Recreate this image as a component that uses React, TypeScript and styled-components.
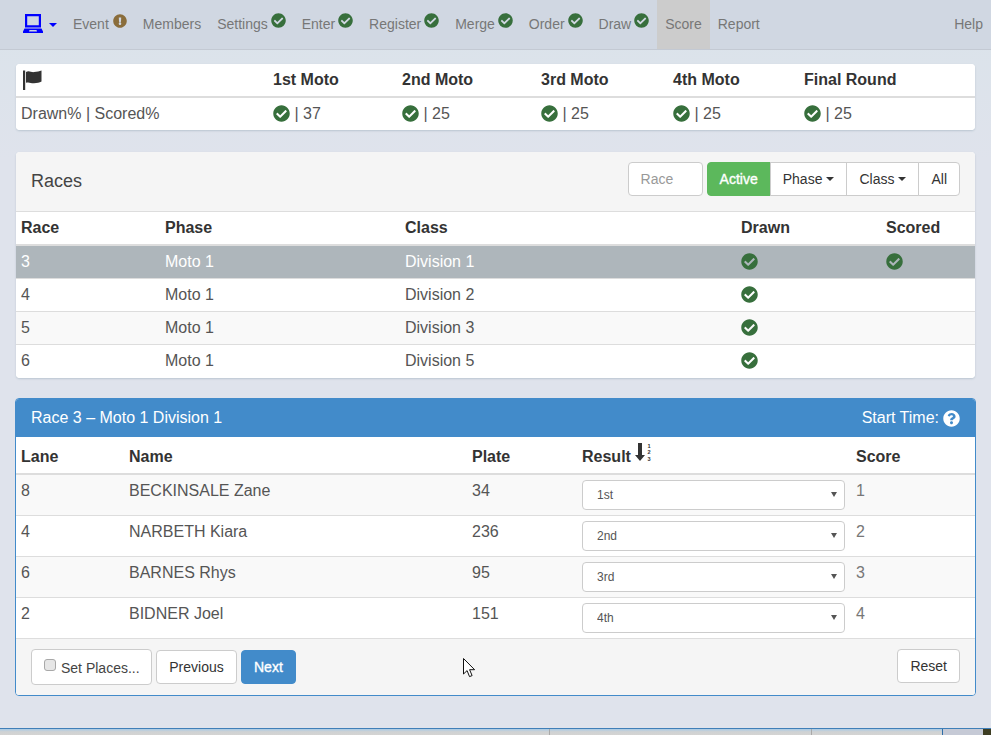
import React from "react";
import styled, { createGlobalStyle } from "styled-components";
import { FaCheckCircle, FaExclamationCircle, FaQuestionCircle } from "react-icons/fa";

const Global = createGlobalStyle`
  html, body { margin: 0; padding: 0; height: 735px; overflow: hidden; }
  body { font-family: "Liberation Sans", Arial, sans-serif; font-size: 16px; color: #333; background: #dfe3ec; }
  * { box-sizing: border-box; }
`;

const Page = styled.div`
  height: 735px;
  display: flex;
  flex-direction: column;
  background: linear-gradient(180deg, #dae3ea 0, #dfe3ec 160px);
`;
const Nav = styled.nav`
  height: 50px;
  flex: none;
  display: flex;
  align-items: stretch;
  background: #d0d7e2;
  border-bottom: 1px solid #c3c9d3;
  padding-left: 23px;
`;
const Brand = styled.div`
  display: flex;
  align-items: flex-start;
  width: 42px;
  gap: 6px;
  padding-top: 14px;
`;
const BrandCaret = styled.span`
  width: 0;
  height: 0;
  margin-top: 9px;
  border-left: 4px solid transparent;
  border-right: 4px solid transparent;
  border-top: 4px solid #0000ff;
`;
const NavItem = styled.div<{ $active?: boolean }>`
  display: flex;
  align-items: center;
  padding: 0 8px 2px;
  font-size: 14px;
  color: #777;
  background: ${(p) => (p.$active ? "#ccc" : "transparent")};
`;
const NavIcon = styled.span<{ $warn?: boolean }>`
  display: inline-flex;
  margin: -6px 0 0 ${(p) => (p.$warn ? 4 : 2.95)}px;
  color: ${(p) => (p.$warn ? "#8a6d3b" : "#376f3c")};
  font-size: ${(p) => (p.$warn ? 14 : 15)}px;
`;
const NavHelp = styled(NavItem)`
  margin-left: auto;
`;
const Main = styled.main`
  flex: 1;
  display: flex;
  flex-direction: column;
  padding: 14px 16px 0;
`;
const Card = styled.section<{ $mt?: number }>`
  background: #fff;
  border-radius: 4px;
  margin-top: ${(p) => p.$mt ?? 0}px;
  box-shadow: 0 1px 2px rgba(80, 110, 130, 0.25);
  overflow: hidden;
`;
const PrimaryCard = styled(Card)`
  border: 1px solid #428bca;
  margin: 20px -1px 0;
  box-shadow: none;
`;
const Row = styled.div<{ $cols: string; $h: number; $bg?: string; $line?: string; $selected?: boolean }>`
  display: grid;
  grid-template-columns: ${(p) => p.$cols};
  height: ${(p) => p.$h}px;
  align-items: center;
  padding: 0 0 0 5px;
  background: ${(p) => (p.$selected ? "#aeb6bb" : p.$bg ?? "#fff")};
  color: ${(p) => (p.$selected ? "#fff" : "#555")};
  border-bottom: ${(p) => p.$line ?? "1px solid #ddd"};
  font-size: 16px;
`;
const TopRow = styled(Row)`
  align-items: start;
`;
const HeadRow = styled(Row)`
  color: #333;
  font-weight: 700;
  border-bottom: 2px solid #ddd;
`;
const Cell = styled.div`
  display: flex;
  align-items: center;
  min-width: 0;
`;
const FlagCell = styled(Cell)`
  padding-left: 1.5px;
`;
const TextCell = styled(Cell)`
  line-height: 22px;
  padding-bottom: 1px;
`;
const HeadCell = styled(Cell)`
  line-height: 22px;
  padding-top: 4px;
`;
const ResultCell = styled(Cell)`
  padding-top: 5px;
`;
const BodyCell = styled(Cell)`
  padding-top: 5px;
  line-height: 22px;
`;
const ScoreCell = styled(BodyCell)`
  color: #777;
`;
const StatusIcon = styled.span`
  display: inline-flex;
  color: #376f3c;
  font-size: 17px;
  margin: 0 4.5px 2px 0;
`;
const PanelHead = styled.header`
  height: 60px;
  display: flex;
  align-items: flex-start;
  justify-content: space-between;
  padding: 10px 15px 0;
  background: #f5f5f5;
  border-bottom: 1px solid #ddd;
`;
const PanelTitle = styled.h3`
  margin: 9px 0 0;
  font-size: 18px;
  line-height: 20px;
  font-weight: 400;
  color: #444;
`;
const Tools = styled.div`
  display: flex;
  align-items: center;
  gap: 4px;
`;
const RaceInput = styled.input`
  width: 75px;
  height: 34px;
  padding: 6px 12px;
  font: 14px "Liberation Sans", Arial, sans-serif;
  border: 1px solid #ccc;
  border-radius: 4px;
  background: #fff;
  &::placeholder { color: #999; opacity: 1; }
`;
const BtnGroup = styled.div`
  display: flex;
`;
const Btn = styled.button<{ $tone?: "success" | "primary" }>`
  height: 34px;
  padding: 0 12px;
  font: 400 14px "Liberation Sans", Arial, sans-serif;
  color: ${(p) => (p.$tone ? "#fff" : "#333")};
  -webkit-text-stroke: ${(p) => (p.$tone ? "0.35px #fff" : "0")};
  background: ${(p) => (p.$tone === "success" ? "#5cb85c" : p.$tone === "primary" ? "#428bca" : "#fff")};
  border: 1px solid ${(p) => (p.$tone === "success" ? "#5cb85c" : p.$tone === "primary" ? "#428bca" : "#ccc")};
  border-radius: 4px;
  display: inline-flex;
  align-items: center;
  justify-content: center;
  white-space: nowrap;
`;
const GroupBtn = styled(Btn)`
  border-radius: 0;
  margin-left: -1px;
  &:first-child { border-radius: 4px 0 0 4px; margin-left: 0; }
  &:last-child { border-radius: 0 4px 4px 0; }
`;
const Caret = styled.span`
  display: inline-block;
  width: 0;
  height: 0;
  margin-left: 4px;
  border-left: 4px solid transparent;
  border-right: 4px solid transparent;
  border-top: 4px solid #333;
`;
const BlueHead = styled.header`
  height: 38px;
  display: flex;
  align-items: center;
  justify-content: space-between;
  padding: 0 15px;
  background: #428bca;
  color: #fff;
  font-size: 16px;
`;
const StartTime = styled.div`
  display: flex;
  align-items: center;
  gap: 4px;
`;
const ResultHead = styled(HeadCell)`
  gap: 4px;
`;
const SortWrap = styled.span`
  display: inline-flex;
  margin-top: -8px;
`;
const SelectWrap = styled.div`
  position: relative;
  width: 263px;
  &::after {
    content: "";
    position: absolute;
    right: 8px;
    top: 12px;
    width: 0;
    height: 0;
    border-left: 3px solid transparent;
    border-right: 3px solid transparent;
    border-top: 5px solid #555;
    pointer-events: none;
  }
`;
const ResultSelect = styled.select`
  display: block;
  width: 100%;
  height: 30px;
  padding: 5px 14px;
  appearance: none;
  font: 12px "Liberation Sans", Arial, sans-serif;
  color: #555;
  background: #fff;
  border: 1px solid #ccc;
  border-radius: 4px;
`;
const PanelFoot = styled.footer`
  height: 56px;
  display: flex;
  align-items: flex-start;
  justify-content: space-between;
  padding: 10px 15px 0;
  background: #f5f5f5;
`;
const FootLeft = styled.div`
  display: flex;
  align-items: flex-start;
  gap: 4px;
`;
const PlacesLabel = styled.label`
  width: 121px;
  height: 36px;
  display: flex;
  align-items: center;
  padding: 2px 0 0 12px;
  background: #fff;
  border: 1px solid #ccc;
  border-radius: 4px;
  font-size: 14px;
  color: #444;
  white-space: nowrap;
`;
const PlacesBox = styled.input`
  appearance: none;
  width: 12px;
  height: 12px;
  margin: -6px 5px 0 0;
  background: #e6e6e6;
  border: 1px solid #a8a8a8;
  border-radius: 3px;
`;
const FootBtn = styled(Btn)`
  margin-top: 1px;
`;
const PreviousBtn = styled(FootBtn)`
  width: 81px;
  padding: 0;
`;
const CursorWrap = styled.div`
  position: absolute;
  left: 463px;
  top: 658px;
  line-height: 0;
`;
const Taskbar = styled.div`
  flex: none;
  height: 7px;
  display: flex;
  border-top: 1px solid #3f7fb8;
`;
const TaskCell = styled.div<{ $w: number; $end?: string }>`
  flex: 0 0 ${(p) => p.$w}px;
  background: linear-gradient(180deg, #a9cbe6 0, #cfd2d4 45%, #d4d4d2 100%);
  border-right: 1px solid ${(p) => p.$end ?? "#a9a9a9"};
`;
const TaskTray = styled.div`
  flex: 1;
  background: #c6cad6;
`;
const TaskCorner = styled.div`
  flex: 0 0 8px;
  background: #3d3d22;
`;

const Check = () => <FaCheckCircle />;

const Laptop = () => (
  <svg width="20" height="19" viewBox="0 0 20 19" aria-hidden="true">
    <path fill="#0000ff" fillRule="evenodd" d="M2 0h16v13.500H2zM4.200 2.200v9h11.600v-9zM1.500 14.500h17l1.500 3V19H0v-1.500zM6.500 16 6 17.500h8l-.5-1.500z" />
  </svg>
);
const Flag = () => (
  <svg width="19" height="20" viewBox="0 0 19 20" aria-hidden="true">
    <path fill="#333" d="M0 .5h2.200V20H0zM3 2c3-1.700 5 .4 8 .1 3-.3 5.500-.9 7.500-1.600v11c-2 1-4.500 1.500-7.500 1.700-3 .2-5-1.600-8-.4z" />
  </svg>
);
const SortOrder = () => (
  <svg width="20" height="22" viewBox="0 0 20 22" aria-hidden="true">
    <path fill="#333" d="M3 1h4v12h3l-5 6-5-6h3z" />
    <text fontSize="5.600" fontWeight="700" fill="#333" fontFamily="Liberation Sans">
      <tspan x="12.500" y="5.500">1</tspan>
      <tspan x="12.500" y="12">2</tspan>
      <tspan x="12.500" y="18.500">3</tspan>
    </text>
  </svg>
);
const Cursor = () => (
  <svg width="13" height="20" viewBox="0 0 13 20" aria-hidden="true">
    <path fill="#fff" stroke="#111" strokeWidth="1" d="M.5.5v15.500l3.600-3.400 2.400 6 2.600-1-2.500-5.900h5z" />
  </svg>
);

const navItems: { label: string; icon?: "warn" | "ok" }[] = [
  { label: "Event", icon: "warn" },
  { label: "Members" },
  { label: "Settings", icon: "ok" },
  { label: "Enter", icon: "ok" },
  { label: "Register", icon: "ok" },
  { label: "Merge", icon: "ok" },
  { label: "Order", icon: "ok" },
  { label: "Draw", icon: "ok" },
];

const SUM_COLS = "252px 129px 139px 132px 131px 171px";
const RACE_COLS = "144px 240px 336px 145px 89px";
const RESULT_COLS = "108px 343px 110px 274px 119px";

const rounds = [
  { name: "1st Moto", value: "37" },
  { name: "2nd Moto", value: "25" },
  { name: "3rd Moto", value: "25" },
  { name: "4th Moto", value: "25" },
  { name: "Final Round", value: "25" },
];

const races = [
  { race: "3", cls: "Division 1", scored: true },
  { race: "4", cls: "Division 2", scored: false },
  { race: "5", cls: "Division 3", scored: false },
  { race: "6", cls: "Division 5", scored: false },
];

const results = [
  { lane: "8", name: "BECKINSALE Zane", plate: "34", place: "1st", score: "1" },
  { lane: "4", name: "NARBETH Kiara", plate: "236", place: "2nd", score: "2" },
  { lane: "6", name: "BARNES Rhys", plate: "95", place: "3rd", score: "3" },
  { lane: "2", name: "BIDNER Joel", plate: "151", place: "4th", score: "4" },
];

export default function App() {
  return (
    <Page>
      <Global />
      <Nav>
        <Brand>
          <Laptop />
          <BrandCaret />
        </Brand>
        {navItems.map((n) => (
          <NavItem key={n.label}>
            {n.label}
            {n.icon && (
              <NavIcon $warn={n.icon === "warn"}>
                {n.icon === "warn" ? <FaExclamationCircle /> : <FaCheckCircle />}
              </NavIcon>
            )}
          </NavItem>
        ))}
        <NavItem $active>Score</NavItem>
        <NavItem>Report</NavItem>
        <NavHelp>Help</NavHelp>
      </Nav>
      <Main>
        <Card>
          <HeadRow $cols={SUM_COLS} $h={34}>
            <FlagCell><Flag /></FlagCell>
            {rounds.map((r) => <Cell key={r.name}>{r.name}</Cell>)}
          </HeadRow>
          <Row $cols={SUM_COLS} $h={32} $line="none">
            <Cell>Drawn% | Scored%</Cell>
            {rounds.map((r) => (
              <Cell key={r.name}>
                <StatusIcon><Check /></StatusIcon>| {r.value}
              </Cell>
            ))}
          </Row>
        </Card>
        <Card $mt={22}>
          <PanelHead>
            <PanelTitle>Races</PanelTitle>
            <Tools>
              <RaceInput placeholder="Race" />
              <BtnGroup>
                <GroupBtn $tone="success">Active</GroupBtn>
                <GroupBtn>Phase<Caret /></GroupBtn>
                <GroupBtn>Class<Caret /></GroupBtn>
                <GroupBtn>All</GroupBtn>
              </BtnGroup>
            </Tools>
          </PanelHead>
          <HeadRow $cols={RACE_COLS} $h={34}>
            <Cell>Race</Cell>
            <Cell>Phase</Cell>
            <Cell>Class</Cell>
            <Cell>Drawn</Cell>
            <Cell>Scored</Cell>
          </HeadRow>
          {races.map((r, i) => (
            <Row
              key={r.race}
              $cols={RACE_COLS}
              $h={33}
              $selected={i === 0}
              $bg={i === 2 ? "#f9f9f9" : "#fff"}
              $line={i === 3 ? "none" : "1px solid #ddd"}
            >
              <TextCell>{r.race}</TextCell>
              <TextCell>Moto 1</TextCell>
              <TextCell>{r.cls}</TextCell>
              <Cell><StatusIcon><Check /></StatusIcon></Cell>
              <Cell>{r.scored && <StatusIcon><Check /></StatusIcon>}</Cell>
            </Row>
          ))}
        </Card>
        <PrimaryCard>
          <BlueHead>
            <span>Race 3 – Moto 1 Division 1</span>
            <StartTime>Start Time: <FaQuestionCircle size={17} /></StartTime>
          </BlueHead>
          <HeadRow $cols={RESULT_COLS} $h={38}>
            <HeadCell>Lane</HeadCell>
            <HeadCell>Name</HeadCell>
            <HeadCell>Plate</HeadCell>
            <ResultHead>Result<SortWrap><SortOrder /></SortWrap></ResultHead>
            <HeadCell>Score</HeadCell>
          </HeadRow>
          {results.map((r, i) => (
            <TopRow key={r.lane} $cols={RESULT_COLS} $h={41} $bg={i % 2 === 0 ? "#f9f9f9" : "#fff"}>
              <BodyCell>{r.lane}</BodyCell>
              <BodyCell>{r.name}</BodyCell>
              <BodyCell>{r.plate}</BodyCell>
              <ResultCell>
                <SelectWrap>
                  <ResultSelect defaultValue={r.place}>
                    <option>1st</option>
                    <option>2nd</option>
                    <option>3rd</option>
                    <option>4th</option>
                  </ResultSelect>
                </SelectWrap>
              </ResultCell>
              <ScoreCell>{r.score}</ScoreCell>
            </TopRow>
          ))}
          <PanelFoot>
            <FootLeft>
              <PlacesLabel><PlacesBox type="checkbox" />Set Places...</PlacesLabel>
              <PreviousBtn>Previous</PreviousBtn>
              <FootBtn $tone="primary">Next</FootBtn>
            </FootLeft>
            <Btn>Reset</Btn>
          </PanelFoot>
        </PrimaryCard>
      </Main>
      <Taskbar>
        <TaskCell $w={550} />
        <TaskCell $w={262} />
        <TaskCell $w={131} $end="#2f6ea8" />
        <TaskTray />
        <TaskCorner />
      </Taskbar>
      <CursorWrap><Cursor /></CursorWrap>
    </Page>
  );
}
